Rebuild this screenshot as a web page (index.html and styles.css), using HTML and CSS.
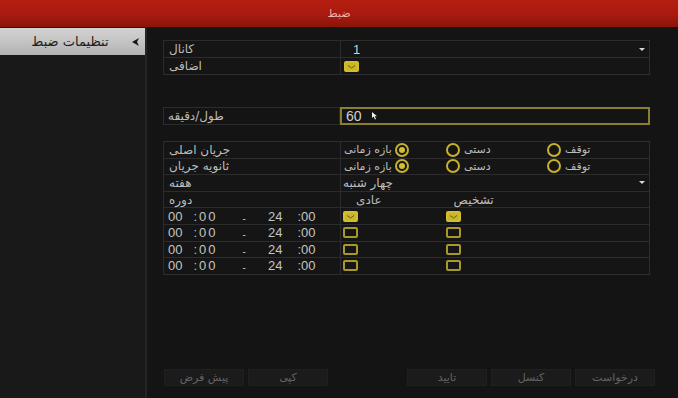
FILE: index.html
```html
<!DOCTYPE html>
<html lang="fa">
<head>
<meta charset="utf-8">
<title>ضبط</title>
<link rel="stylesheet" href="styles.css">
</head>
<body>
<div class="app">
  <header class="titlebar"><span dir="rtl">ضبط</span></header>
  <div class="main">
    <aside class="sidebar">
      <div class="side-item">
        <span class="side-text"><span dir="rtl">تنظیمات ضبط</span></span>
        <svg class="chev" width="7" height="8" viewBox="0 0 7 8"><polygon points="7,0 0,4 7,8 5,4" fill="#161616"/></svg>
      </div>
    </aside>
    <section class="content">
      <div class="tbl tbl1">
        <div class="cell lbl"><span dir="rtl">کانال</span></div>
        <div class="cell val sel"><span class="num">1</span><span class="arrow"></span></div>
        <div class="cell lbl"><span dir="rtl">اضافی</span></div>
        <div class="cell val"><span class="cb on"><svg width="15" height="11" viewBox="0 0 15 11"><polyline points="4,4.5 7.5,7 11,4.5" fill="none" stroke="#6a5f16" stroke-width="1"/></svg></span></div>
      </div>

      <div class="dur">
        <div class="dur-lbl"><span dir="rtl">طول/دقیقه</span></div>
        <div class="dur-val"><span class="num big">60</span>
          <svg class="cursor" width="6" height="8" viewBox="0 0 6 8"><polygon points="0,0 0,6 1.6,4.6 3,7.5 4,7 2.7,4.2 5,4.2" fill="#f0f0f0"/></svg>
        </div>
      </div>

      <div class="tbl tbl2">
        <div class="cell lbl"><span dir="rtl">جریان اصلی</span></div>
        <div class="cell val radios">
          <div class="slot s1"><span dir="rtl">بازه زمانی</span><span class="rd on"></span></div>
          <div class="slot s2"><span class="rd"></span><span dir="rtl">دستی</span></div>
          <div class="slot s3"><span class="rd"></span><span dir="rtl">توقف</span></div>
        </div>
        <div class="cell lbl"><span dir="rtl">ثانویه جریان</span></div>
        <div class="cell val radios">
          <div class="slot s1"><span dir="rtl">بازه زمانی</span><span class="rd on"></span></div>
          <div class="slot s2"><span class="rd"></span><span dir="rtl">دستی</span></div>
          <div class="slot s3"><span class="rd"></span><span dir="rtl">توقف</span></div>
        </div>
        <div class="cell lbl"><span dir="rtl">هفته</span></div>
        <div class="cell val sel week"><span dir="rtl">چهار شنبه</span><span class="arrow"></span></div>
        <div class="cell lbl"><span dir="rtl">دوره</span></div>
        <div class="cell val heads"><span class="h1" dir="rtl">عادی</span><span class="h2" dir="rtl">تشخیص</span></div>

        <div class="cell time" dir="ltr"><span class="t a">00</span><span class="t b">:</span><span class="t c">00</span><span class="t d">-</span><span class="t e">24</span><span class="t f">:00</span></div>
        <div class="cell val cbs"><span class="cb on"><svg width="15" height="11" viewBox="0 0 15 11"><polyline points="4,4.5 7.5,7 11,4.5" fill="none" stroke="#6a5f16" stroke-width="1"/></svg></span><span class="cb on second"><svg width="15" height="11" viewBox="0 0 15 11"><polyline points="4,4.5 7.5,7 11,4.5" fill="none" stroke="#6a5f16" stroke-width="1"/></svg></span></div>

        <div class="cell time" dir="ltr"><span class="t a">00</span><span class="t b">:</span><span class="t c">00</span><span class="t d">-</span><span class="t e">24</span><span class="t f">:00</span></div>
        <div class="cell val cbs"><span class="cb"></span><span class="cb second"></span></div>

        <div class="cell time" dir="ltr"><span class="t a">00</span><span class="t b">:</span><span class="t c">00</span><span class="t d">-</span><span class="t e">24</span><span class="t f">:00</span></div>
        <div class="cell val cbs"><span class="cb"></span><span class="cb second"></span></div>

        <div class="cell time" dir="ltr"><span class="t a">00</span><span class="t b">:</span><span class="t c">00</span><span class="t d">-</span><span class="t e">24</span><span class="t f">:00</span></div>
        <div class="cell val cbs"><span class="cb"></span><span class="cb second"></span></div>
      </div>

      <div class="btnbar">
        <div class="group">
          <div class="btn"><span dir="rtl">پیش فرض</span></div>
          <div class="btn"><span dir="rtl">کپی</span></div>
        </div>
        <div class="group">
          <div class="btn"><span dir="rtl">تایید</span></div>
          <div class="btn"><span dir="rtl">کنسل</span></div>
          <div class="btn"><span dir="rtl">درخواست</span></div>
        </div>
      </div>
    </section>
  </div>
</div>
</body>
</html>
```

FILE: styles.css
```css
html, body {
  margin: 0;
  padding: 0;
}
body {
  width: 678px;
  height: 398px;
  overflow: hidden;
  background: #141414;
  font-family: "DejaVu Sans", "Noto Sans", sans-serif;
}
.app {
  width: 678px;
  height: 398px;
  display: flex;
  flex-direction: column;
}
.titlebar {
  height: 27px;
  flex: none;
  background: linear-gradient(#b51e11, #a81a0f 55%, #8a140b);
  display: flex;
  align-items: center;
  justify-content: center;
  color: #eab5aa;
  font-size: 11px;
}
.main {
  flex: 1;
  display: flex;
  min-height: 0;
}
.sidebar {
  width: 145px;
  flex: none;
  background: #191919;
  border-right: 2px solid #242424;
  padding-top: 1px;
}
.side-item {
  height: 27px;
  background: linear-gradient(#d2d2d2, #c4c4c4 50%, #b2b2b2);
  display: flex;
  align-items: center;
  padding-right: 6px;
}
.side-text {
  flex: 1;
  text-align: center;
  padding-left: 8px;
  font-size: 13px;
  color: #1c1c1c;
}
.chev {
  display: block;
}
.content {
  flex: 1;
  display: flex;
  flex-direction: column;
  padding: 13px 0 12px 16px;
}
.tbl {
  display: grid;
  grid-template-columns: 176px 308px;
  gap: 1px;
  padding: 1px;
  background: #2c2c2c;
  width: max-content;
}
.tbl1 {
  grid-auto-rows: 16px;
}
.tbl2 {
  margin-top: 16px;
  grid-auto-rows: 15.6px;
}
.cell {
  background: #151515;
  display: flex;
  align-items: center;
  font-size: 11px;
  color: #bdbdbd;
  white-space: nowrap;
}
.lbl {
  padding-left: 5px;
  font-size: 12px;
}
.val {
  padding-left: 3px;
}
.sel {
  justify-content: space-between;
  padding-right: 4px;
}
.num {
  font-family: "Liberation Sans", Arial, sans-serif;
  font-size: 13px;
  color: #d0d0d0;
  padding-left: 9px;
}
.arrow {
  width: 0;
  height: 0;
  border-left: 3px solid transparent;
  border-right: 3px solid transparent;
  border-top: 3px solid #d8d8d8;
}
.cb {
  width: 15px;
  height: 11px;
  box-sizing: border-box;
  border: 2px solid #a6982b;
  border-radius: 2px;
  background: #151515;
  display: block;
  position: relative;
}
.cb.on {
  background: #c9b62a;
  border-color: #d3bf2e;
}
.cb svg {
  position: absolute;
  left: -2px;
  top: -2px;
}
.dur {
  display: flex;
  margin-top: 32px;
  height: 18px;
}
.dur-lbl {
  width: 177px;
  box-sizing: border-box;
  border: 1px solid #2c2c2c;
  display: flex;
  align-items: center;
  padding-left: 4px;
  font-size: 12px;
  color: #bdbdbd;
}
.dur-val {
  width: 310px;
  box-sizing: border-box;
  border: 2px solid #8a7e2f;
  display: flex;
  align-items: center;
}
.num.big {
  font-size: 14px;
  padding-left: 4px;
}
.cursor {
  margin-left: 10px;
  display: block;
}
.radios {
  padding-left: 3px;
}
.slot {
  display: flex;
  align-items: center;
  gap: 4px;
}
.s1 {
  width: 102px;
  gap: 3px;
}
.s2 {
  width: 101px;
}
.rd {
  width: 14px;
  height: 14px;
  box-sizing: border-box;
  border: 2px solid #c5b22b;
  border-radius: 50%;
  display: block;
  position: relative;
  flex: none;
}
.rd.on::after {
  content: "";
  position: absolute;
  left: 2px;
  top: 2px;
  width: 6px;
  height: 6px;
  border-radius: 50%;
  background: #d3bf30;
}
.week {
  padding-left: 2px;
  font-size: 12px;
}
.heads {
  font-size: 12px;
}
.heads .h1 {
  margin-left: 12px;
}
.heads .h2 {
  margin-left: 72px;
}
.cbs {
  padding-left: 2px;
}
.cb.second {
  margin-left: 88px;
}
.time {
  font-family: "Liberation Sans", Arial, sans-serif;
  font-size: 13px;
  color: #c4c4c4;
  padding-left: 4px;
}
.t {
  display: block;
}
.t.b {
  margin-left: 11px;
}
.t.c {
  margin-left: 2px;
  letter-spacing: 2px;
}
.t.d {
  margin-left: 25px;
  font-size: 10px;
  padding-top: 4px;
}
.t.e {
  margin-left: 22px;
}
.t.f {
  margin-left: 15px;
}
.btnbar {
  margin-top: auto;
  width: 491px;
  padding-left: 1px;
  display: flex;
  justify-content: space-between;
}
.group {
  display: flex;
  gap: 4px;
}
.btn {
  width: 80px;
  height: 17px;
  box-sizing: border-box;
  background: #1b1b1b;
  border: 1px solid #202020;
  display: flex;
  align-items: center;
  justify-content: center;
  font-size: 11px;
  color: #646464;
}
```
